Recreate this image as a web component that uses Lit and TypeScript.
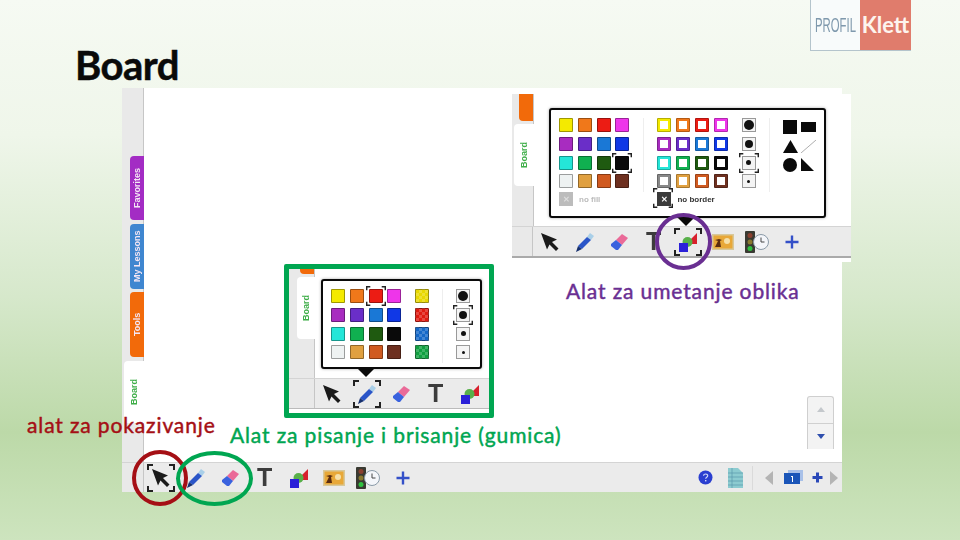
import { LitElement, html, css, nothing } from 'lit';
import { customElement, property } from 'lit/decorators.js';

const FILLS = [
  '#f4ea00', '#f0781a', '#ec1c14', '#ee35ea',
  '#a82cc0', '#6a2ec8', '#1a78d6', '#1038e6',
  '#24e6d8', '#10b050', '#1f5a10', '#0a0a0a',
  '#eef2f2', '#e0a040', '#d05a20', '#6e3020',
];
const PATTERNS = ['#e8d800', '#e01a10', '#1468c8', '#10a040'];
const DOTS = [10, 8, 5, 3];

const brackets = html`<svg class="brackets" viewBox="0 0 28 28" fill="none" stroke="#222" stroke-width="2">
  <path d="M1 6V1h5M22 1h5v5M27 22v5h-5M6 27H1v-5"/>
</svg>`;

const icons: Record<string, unknown> = {
  arrow: html`<svg width="22" height="22" viewBox="0 0 22 22"><path d="M2 2l16 6.500-5 2.500 6.500 6.500-2.500 2.500-6.500-6.500-2.500 5z" fill="#1a1a1a"/></svg>`,
  pen: html`<svg width="22" height="22" viewBox="0 0 22 22"><path d="M16 2l4 3-3 4-4-3z" fill="#a9cfe8"/><path d="M13 6l4 3-9 9-4-3z" fill="#2a55c8"/><path d="M4 15l4 3-6 3z" fill="#16306e"/></svg>`,
  eraser: html`<svg width="22" height="22" viewBox="0 0 22 22"><path d="M14 3l6 4-6 7-6-5z" fill="#ea6a98"/><path d="M8 9l6 5-4 5-2 0-5-4 0-2z" fill="#3a62de"/></svg>`,
  shapes: html`<svg width="22" height="22" viewBox="0 0 22 22"><path d="M20 2v11H9z" fill="#d8202c"/><circle cx="10.5" cy="11" r="5" fill="#58b04a"/><path d="M2 12h9v9H2z" fill="#2a20d8"/></svg>`,
  image: html`<svg width="22" height="16" viewBox="0 0 22 16"><rect width="22" height="16" fill="#d8c89a"/><rect x="1.500" y="1.500" width="19" height="13" fill="#e8a838"/><circle cx="15" cy="7" r="3" fill="#f6e0a8"/><path d="M3 13l3-6-3-1 4-1 3 1-2 1 1 6z" fill="#5a2c10"/></svg>`,
  timer: html`<svg width="26" height="24" viewBox="0 0 26 24"><rect x="1" y="1" width="10" height="22" rx="1" fill="#3a3a32"/><circle cx="6" cy="5.500" r="2.500" fill="#8a4030"/><circle cx="6" cy="12" r="2.500" fill="#8a7a30"/><circle cx="6" cy="18.500" r="2.500" fill="#30c040"/><circle cx="17" cy="12" r="7.500" fill="#f4f6fa" stroke="#8a9aa8"/><path d="M17 7.500V12h3.500" fill="none" stroke="#444"/></svg>`,
  plus: html`<svg width="16" height="16" viewBox="0 0 16 16"><path d="M6.800 1.500h2.400v5.300h5.300v2.400H9.200v5.300H6.800V9.200H1.500V6.800h5.300z" fill="#3450c8"/></svg>`,
  help: html`<svg width="15" height="15" viewBox="0 0 15 15"><circle cx="7.500" cy="7.500" r="7" fill="#2a3fd0"/><path d="M5.500 5.800c.2-2.400 4.300-2.400 4.200 0 0 1.600-2 1.500-2 3" fill="none" stroke="#cfd8f8" stroke-width="1.200"/><rect x="7" y="10" width="1.400" height="1.400" fill="#cfd8f8"/></svg>`,
  doc: html`<svg width="17" height="20" viewBox="0 0 17 20"><path d="M1 0h10l5 5v15H1z" fill="#8ccbd0"/><path d="M1 5h15M1 9h15M1 13h15M1 17h15M5 0v20" stroke="#5a9aac" stroke-width=".7"/></svg>`,
  left: html`<svg width="9" height="14" viewBox="0 0 9 14"><path d="M8 0v14L0 7z" fill="#b4b4b4"/></svg>`,
  right: html`<svg width="9" height="14" viewBox="0 0 9 14"><path d="M1 0v14l8-7z" fill="#b4b4b4"/></svg>`,
  page: html`<svg width="20" height="15" viewBox="0 0 20 15"><rect x="4" y="0" width="15" height="11" fill="#a8c0e8"/><rect x="0" y="3" width="16" height="11" fill="#1a55b8"/><path d="M7 6h2v6H8V7H7z" fill="#fff"/></svg>`,
  smallPlus: html`<svg width="11" height="11" viewBox="0 0 11 11"><path d="M4 .5h3V4h3.500v3H7v3.500H4V7H.5V4H4z" fill="#2a48b8"/></svg>`,
};

@customElement('color-palette')
export class ColorPalette extends LitElement {
  @property() mode = 'pen';

  static styles = css`
    :host { display: block; position: relative; }
    .box {
      display: flex;
      background: #fff;
      border: 2px solid #0a0a0a;
      border-radius: 3px;
      box-shadow: 0 0 3px rgb(0 0 0 / 0.35);
      box-sizing: border-box;
      height: 100%;
      padding: 8px 0 0 8px;
    }
    .grid {
      display: grid;
      grid-template-columns: repeat(4, 14px);
      grid-auto-rows: 14px;
      gap: 4.8px;
    }
    .single { grid-template-columns: 14px; }
    .sw {
      position: relative;
      box-sizing: border-box;
      border: 1px solid rgb(0 0 0 / 0.35);
      border-radius: 1px;
    }
    .outline { background: #fff; border-width: 3px; border-style: solid; outline: 1px solid rgb(0 0 0 / 0.25); outline-offset: -1px; }
    .pattern { background-image: repeating-conic-gradient(rgb(255 255 255 / 0.2) 0 25%, transparent 0 50%); background-size: 6px 6px; }
    .dot-box {
      display: flex;
      align-items: center;
      justify-content: center;
      position: relative;
      box-sizing: border-box;
      border: 1px solid #999;
      background: #f4f4f4;
    }
    .dot { background: #111; border-radius: 50%; }
    .divider { width: 1px; height: 74px; background: #eee; }
    .arrow {
      position: absolute;
      bottom: -8px;
      width: 0;
      height: 0;
      border: 9px solid transparent;
      border-bottom: 0;
      border-top-color: #0a0a0a;
    }
    .brackets { position: absolute; left: -4px; top: -4px; width: 20px; height: 20px; }
    .col { display: flex; flex-direction: column; }
    .foot { display: flex; align-items: center; height: 14px; margin-top: 4px; font: 700 8px "Liberation Sans", sans-serif; color: #333; gap: 6px; }
    .foot.off { color: #bbb; }
    .nofill { width: 14px; height: 14px; background: #bcbcbc; color: #ddd; display: flex; align-items: center; justify-content: center; font-size: 8px; position: relative; flex: none; }
    .noborder { background: #3a3a3a; color: #fff; }
    .shapes { display: grid; grid-template-columns: 17px 17px; grid-auto-rows: 18.800px; column-gap: 1px; align-items: center; }
    .fill-col { margin-right: 14px; }
    .outline-col { margin-left: 13px; }
  `;

  private fills(selected: number) {
    return html`<div class="grid">
      ${FILLS.map((c, i) => html`<div class="sw" style="background:${c}">${i === selected ? brackets : nothing}</div>`)}
    </div>`;
  }

  private dots(selected: number) {
    return html`<div class="grid single">
      ${DOTS.map((d, i) => html`<div class="dot-box">
        <div class="dot" style="width:${d}px;height:${d}px"></div>
        ${i === selected ? brackets : nothing}
      </div>`)}
    </div>`;
  }

  render() {
    if (this.mode === 'pen') {
      return html`<div class="box">
        ${this.fills(2)}
        <div class="grid single" style="margin-left:14px">
          ${PATTERNS.map(c => html`<div class="sw pattern" style="background-color:${c}"></div>`)}
        </div>
        <div class="divider" style="margin-left:13px"></div>
        <div style="margin-left:13px">${this.dots(1)}</div>
      </div>
      <div class="arrow" style="left:36px"></div>`;
    }
    return html`<div class="box">
      <div class="col fill-col">
        ${this.fills(11)}
        <div class="foot off"><div class="nofill">✕</div><span>no fill</span></div>
      </div>
      <div class="divider"></div>
      <div class="col outline-col">
        <div class="grid">
          ${FILLS.map(c => html`<div class="sw outline" style="border-color:${c === '#eef2f2' ? '#888' : c}"></div>`)}
        </div>
        <div class="foot"><div class="nofill noborder">✕${brackets}</div><span>no border</span></div>
      </div>
      <div style="margin-left:14px">${this.dots(2)}</div>
      <div class="divider" style="margin-left:13px"></div>
      <div class="shapes" style="margin-left:13px">
        <svg width="14" height="14"><rect width="14" height="14" fill="#0a0a0a"/></svg>
        <svg width="15" height="10"><rect width="15" height="10" fill="#0a0a0a"/></svg>
        <svg width="15" height="13"><path d="M7.500 0L15 13H0z" fill="#0a0a0a"/></svg>
        <svg width="15" height="13"><path d="M0 13L15 0" stroke="#777" stroke-width=".6"/></svg>
        <svg width="14" height="14"><circle cx="7" cy="7" r="7" fill="#0a0a0a"/></svg>
        <svg width="13" height="13"><path d="M0 0L13 13H0z" fill="#0a0a0a"/></svg>
      </div>
    </div>
    <div class="arrow" style="left:128px"></div>`;
  }
}

@customElement('tool-bar')
export class ToolBar extends LitElement {
  @property({ type: Number }) selected = -1;
  @property({ type: Number }) count = 8;
  @property({ type: Number }) lead = 22;
  @property({ type: Boolean }) nav = false;

  static styles = css`
    :host {
      display: flex;
      align-items: center;
      height: 100%;
      background: #ebebeb;
      border-top: 1px solid #d4d4d4;
      box-sizing: border-box;
      overflow: hidden;
    }
    .lead { flex: none; height: 100%; box-sizing: border-box; border-right: 1px solid #c6c6c6; background: #e9e9e9; }
    .slot {
      position: relative;
      flex: none;
      width: 34.500px;
      height: 100%;
      display: flex;
      align-items: center;
      justify-content: center;
    }
    .t { font: 700 25px "Liberation Sans", sans-serif; color: #3c3c3c; line-height: 1; }
    .brackets { position: absolute; left: 3px; top: 1px; width: 28px; height: 28px; }
    .nav { margin-left: auto; display: flex; align-items: center; padding-right: 4px; height: 100%; }
    .help { margin-right: 14px; display: flex; }
    .doc { margin-right: 8px; display: flex; }
    .sep { width: 1px; height: 24px; background: #dadada; margin-right: 12px; }
    .pg { margin: 0 8px 0 10px; display: flex; }
    .sm { margin-right: 6px; display: flex; }
  `;

  render() {
    const tools = [
      icons.arrow, icons.pen, icons.eraser,
      html`<span class="t">T</span>`,
      icons.shapes, icons.image, icons.timer, icons.plus,
    ].slice(0, this.count);
    return html`
      <div class="lead" style="width:${this.lead}px"></div>
      ${tools.map((icon, i) => html`<div class="slot">${icon}${i === this.selected ? brackets : nothing}</div>`)}
      ${this.nav ? html`<div class="nav">
        <span class="help">${icons.help}</span>
        <span class="doc">${icons.doc}</span>
        <span class="sep"></span>
        ${icons.left}
        <span class="pg">${icons.page}</span>
        <span class="sm">${icons.smallPlus}</span>
        ${icons.right}
      </div>` : nothing}
    `;
  }
}

@customElement('app-root')
export class AppRoot extends LitElement {
  static styles = css`
    :host {
      display: block;
      position: relative;
      width: 960px;
      height: 540px;
      overflow: hidden;
      font-family: Lato, "Open Sans", sans-serif;
      background: linear-gradient(180deg, #f6faf3 0%, #eff6ea 25%, #d6e8cb 55%, #bcd9a8 80%, #cde4be 100%);
    }

    .logo {
      position: absolute;
      left: 810px;
      top: 0;
      width: 101px;
      height: 51px;
      display: flex;
      box-sizing: border-box;
      border: 1px solid #b4c4cc;
      border-top: 0;
      border-right: 0;
    }
    .logo-left {
      width: 49px;
      background: #f8fbfb;
      color: #7f99ad;
      font: 400 21px/50px "Liberation Sans", sans-serif;
      overflow: hidden;
    }
    .logo-left span { display: inline-block; transform: scaleX(0.54); transform-origin: 0 0; margin-left: 4px; }
    .logo-right {
      flex: 1;
      background: #e07c6c;
      color: #fdf4ee;
      font: 700 22px/49px Lato, sans-serif;
      text-align: center;
    }

    h1 {
      position: absolute;
      left: 75px;
      top: 41px;
      margin: 0;
      font: 700 40px/1.2 Lato, sans-serif;
      letter-spacing: -0.5px;
      color: #0a0a0a;
      -webkit-text-stroke: 0.5px currentColor;
    }

    .shot { position: absolute; background: #fff; display: flex; flex-direction: column; filter: blur(0.35px); }
    .body { flex: 1; display: flex; min-height: 0; }

    .main { left: 122px; top: 88px; width: 720px; height: 404px; }
    .main tool-bar { height: 30px; flex: none; }

    .gutter {
      flex: none;
      display: flex;
      flex-direction: column;
      align-items: flex-end;
      box-sizing: border-box;
      background: #e9e9e9;
      border-right: 1px solid #c6c6c6;
    }
    .main .gutter { width: 22px; padding-top: 68px; }
    .tab {
      writing-mode: vertical-rl;
      transform: rotate(180deg);
      display: flex;
      align-items: center;
      justify-content: center;
      box-sizing: border-box;
      color: #f4e6f4;
      font: 700 9px "Liberation Sans", sans-serif;
      width: 14px;
      border-radius: 0 4px 4px 0;
      margin-right: -1px;
    }
    .favorites { height: 64px; background: #a32cc4; margin-bottom: 4px; }
    .lessons { height: 65px; background: #3f86d0; margin-bottom: 3px; }
    .tools { height: 65px; background: #f26a0a; margin-bottom: 4px; }
    .board { height: 62px; width: 20px; background: #fff; color: #3fae49; margin-bottom: 0; }
    .stub { height: 27px; width: 14px; background: #f26a0a; border-radius: 0 0 0 4px; margin-bottom: 3px; }
    .main-canvas { flex: 1; position: relative; }

    .scroller {
      position: absolute;
      right: 8px;
      bottom: 13px;
      width: 27px;
      height: 53px;
      display: flex;
      flex-direction: column;
      box-sizing: border-box;
      border: 1px solid #cfcfcf;
      border-bottom: 0;
      border-radius: 3px 3px 0 0;
      background: #f3f3f3;
    }
    .scroller div { flex: 1; display: flex; align-items: center; justify-content: center; }
    .scroller div + div { border-top: 1px solid #d0d0d0; }
    .tri { width: 0; height: 0; border: 4px solid transparent; }
    .tri.up { border-top: 0; border-bottom: 5px solid #c4c8cc; }
    .tri.down { border-bottom: 0; border-top: 5px solid #2f4fae; }

    .upper { left: 512px; top: 94px; width: 339px; height: 168px; padding-bottom: 4px; box-sizing: border-box; }
    .upper .gutter { width: 22px; }
    .upper .content { flex: 1; padding: 14px 0 0 15px; }
    .upper color-palette { width: 277px; height: 110px; }
    .upper tool-bar { height: 32px; border-bottom: 2px solid #aaa; flex: none; }

    .framed {
      left: 284px;
      top: 264px;
      width: 210px;
      height: 154px;
      box-sizing: border-box;
      border: 5px solid #00a651;
      border-radius: 2px;
      padding-bottom: 4px;
    }
    .framed .gutter { width: 26px; }
    .framed .content { flex: 1; padding: 10px 0 0 6px; }
    .framed color-palette { width: 161px; height: 90px; }
    .framed tool-bar { height: 31px; flex: none; border-bottom: 1px solid #bbb; }

    .note {
      position: absolute;
      white-space: nowrap;
      font-size: 21px;
      line-height: 24px;
      letter-spacing: 0.87px;
      margin: 0;
      -webkit-text-stroke: 0.45px currentColor;
    }
    .purple { left: 566px; top: 279px; color: #6a2f92; }
    .red { left: 27px; top: 413px; color: #a50f15; }
    .green { left: 230px; top: 423px; color: #00a651; }

    .ring { position: absolute; box-sizing: border-box; border-radius: 50%; border: 4px solid; }
    .ring-purple { left: 655px; top: 213px; width: 57px; height: 57px; border-color: #6a2f92; }
    .ring-red { left: 132px; top: 450px; width: 56px; height: 56px; border-color: #a50f15; }
    .ring-green { left: 176px; top: 451px; width: 77px; height: 55px; border-color: #00a651; }
  `;

  render() {
    return html`
      <div class="logo">
        <div class="logo-left"><span>PROFIL</span></div>
        <div class="logo-right">Klett</div>
      </div>
      <h1>Board</h1>

      <section class="shot main">
        <div class="body">
          <div class="gutter">
            <div class="tab favorites">Favorites</div>
            <div class="tab lessons">My Lessons</div>
            <div class="tab tools">Tools</div>
            <div class="tab board">Board</div>
          </div>
          <div class="main-canvas">
            <div class="scroller">
              <div><span class="tri up"></span></div>
              <div><span class="tri down"></span></div>
            </div>
          </div>
        </div>
        <tool-bar nav selected="0" lead="22"></tool-bar>
      </section>

      <section class="shot upper">
        <div class="body">
          <div class="gutter">
            <div class="stub"></div>
            <div class="tab board">Board</div>
          </div>
          <div class="content"><color-palette mode="shape"></color-palette></div>
        </div>
        <tool-bar selected="4" lead="21"></tool-bar>
      </section>

      <section class="shot framed">
        <div class="body">
          <div class="gutter">
            <div class="stub" style="height:5px;margin-bottom:3px"></div>
            <div class="tab board" style="width:18px">Board</div>
          </div>
          <div class="content"><color-palette mode="pen"></color-palette></div>
        </div>
        <tool-bar selected="1" count="5" lead="26"></tool-bar>
      </section>

      <p class="note purple">Alat za umetanje oblika</p>
      <p class="note red">alat za pokazivanje</p>
      <p class="note green">Alat za pisanje i brisanje (gumica)</p>

      <div class="ring ring-purple"></div>
      <div class="ring ring-red"></div>
      <div class="ring ring-green"></div>
    `;
  }
}
